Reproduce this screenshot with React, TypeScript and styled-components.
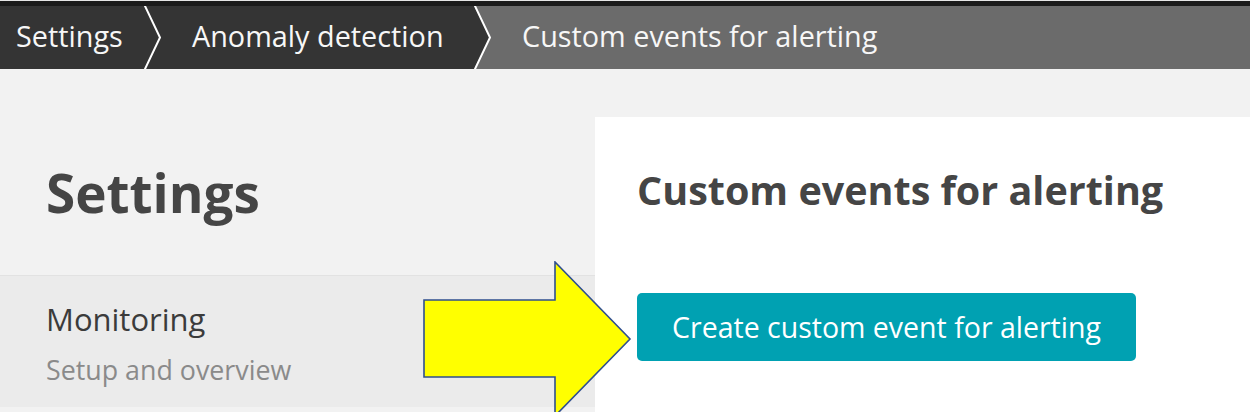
import React from "react";
import styled, { createGlobalStyle } from "styled-components";

const GlobalStyle = createGlobalStyle`
  html, body {
    margin: 0;
    padding: 0;
    background: #f2f2f2;
    font-family: "Open Sans", "Noto Sans", sans-serif;
  }
`;

const Page = styled.div`
  position: relative;
  width: 1250px;
  height: 412px;
  overflow: hidden;
  background: #f2f2f2;
  display: flex;
  flex-direction: column;
`;

const TopEdge = styled.div`
  height: 1px;
  background: #e6e6e6;
`;

const TopStrip = styled.div`
  height: 5px;
  background: #1b1b1b;
`;

const Breadcrumbs = styled.nav`
  display: flex;
  height: 63px;
  background: #343434;
`;

const Crumb = styled.div<{ $width?: number; $current?: boolean; $first?: boolean }>`
  position: relative;
  display: flex;
  align-items: center;
  box-sizing: border-box;
  flex: ${(p) => (p.$width ? `0 0 ${p.$width}px` : "1 1 auto")};
  padding: 0 0 4px ${(p) => (p.$first ? 16 : 47)}px;
  background: ${(p) => (p.$current ? "#6b6b6b" : "#343434")};
  color: #f7f7f7;
  font-size: 28.8px;
  white-space: nowrap;
`;

const ChevronSvg = styled.svg`
  position: absolute;
  top: 0;
  right: -17px;
  z-index: 2;
`;

const Chevron = () => (
  <ChevronSvg width="18" height="63" viewBox="0 0 18 63">
    <polygon points="0,0 16,31.5 0,63" fill="#343434" />
    <polyline points="0.5,-1 16,31.5 0.5,64" fill="none" stroke="#ffffff" strokeWidth="2" />
  </ChevronSvg>
);

const Body = styled.div`
  flex: 1;
  display: flex;
`;

const Sidebar = styled.aside`
  flex: 0 0 595px;
  display: flex;
  flex-direction: column;
`;

const SidebarHeader = styled.div`
  height: 206px;
  box-sizing: border-box;
  padding: 87px 0 0 46px;
`;

const SidebarTitle = styled.h1`
  margin: 0;
  font-size: 53px;
  font-weight: 700;
  color: #454545;
  line-height: normal;
`;

const NavItem = styled.div`
  height: 132px;
  box-sizing: border-box;
  border-top: 1px solid #e2e2e2;
  background: #ebebeb;
  padding: 22px 0 0 46px;
  display: flex;
  flex-direction: column;
  gap: 11px;
`;

const NavTitle = styled.div`
  font-size: 31px;
  color: #3b3b3b;
  line-height: normal;
`;

const NavSub = styled.div`
  font-size: 26.8px;
  color: #8a8a8a;
  line-height: normal;
`;

const Content = styled.main`
  flex: 1;
  margin-top: 48px;
  background: #ffffff;
  padding: 46px 0 0 42px;
  display: flex;
  flex-direction: column;
  align-items: flex-start;
`;

const ContentTitle = styled.h2`
  margin: 0;
  font-size: 39.5px;
  font-weight: 700;
  color: #454545;
  line-height: normal;
`;

const PrimaryButton = styled.button`
  margin-top: 76px;
  width: 499px;
  height: 68px;
  border: none;
  border-radius: 5px;
  background: #00a1b2;
  color: #ffffff;
  font-family: "Open Sans", "Noto Sans", sans-serif;
  font-size: 28.5px;
  display: flex;
  align-items: center;
  justify-content: center;
  padding: 0;
  cursor: pointer;
`;

const ArrowSvg = styled.svg`
  position: absolute;
  left: 423px;
  top: 261px;
`;

const Arrow = () => (
  <ArrowSvg width="210" height="160" viewBox="0 0 210 160">
    <polygon
      points="1,39 132,39 132,1 207,78 132,155 132,116 1,116"
      fill="#ffff00"
      stroke="#2f4f8f"
      strokeWidth="1.6"
      strokeLinejoin="miter"
    />
  </ArrowSvg>
);

export default function App() {
  return (
    <>
      <GlobalStyle />
      <Page>
        <TopEdge />
        <TopStrip />
        <Breadcrumbs>
          <Crumb $first $width={145}>
            Settings
            <Chevron />
          </Crumb>
          <Crumb $width={330}>
            Anomaly detection
            <Chevron />
          </Crumb>
          <Crumb $current>Custom events for alerting</Crumb>
        </Breadcrumbs>
        <Body>
          <Sidebar>
            <SidebarHeader>
              <SidebarTitle>Settings</SidebarTitle>
            </SidebarHeader>
            <NavItem>
              <NavTitle>Monitoring</NavTitle>
              <NavSub>Setup and overview</NavSub>
            </NavItem>
          </Sidebar>
          <Content>
            <ContentTitle>Custom events for alerting</ContentTitle>
            <PrimaryButton>Create custom event for alerting</PrimaryButton>
          </Content>
        </Body>
        <Arrow />
      </Page>
    </>
  );
}
